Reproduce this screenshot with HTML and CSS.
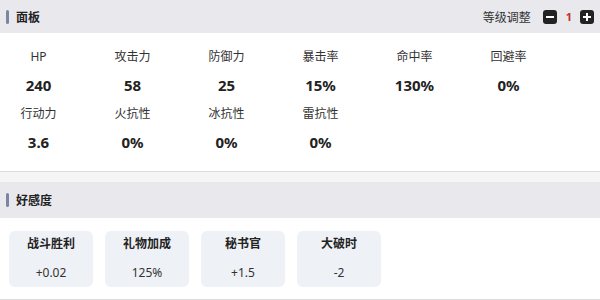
FILE: index.html
```html
<!DOCTYPE html>
<html lang="zh">
<head>
    <meta charset="UTF-8">
    <meta name="viewport" content="width=device-width, initial-scale=1.0">
    <title>面板</title>
    <link rel="stylesheet" href="styles.css">
</head>
<body>
    <div class="section-head">
        <div class="head-title"><span class="accent"></span>面板</div>
        <div class="level">
            <span class="level-label">等级调整</span>
            <button class="step">
                <svg width="10" height="10" viewBox="0 0 10 10"><rect x="1" y="4" width="8" height="2" fill="#fff"/></svg>
            </button>
            <span class="level-num">1</span>
            <button class="step">
                <svg width="10" height="10" viewBox="0 0 10 10"><rect x="1" y="4" width="8" height="2" fill="#fff"/><rect x="4" y="1" width="2" height="8" fill="#fff"/></svg>
            </button>
        </div>
    </div>

    <div class="stats">
        <div class="stat"><div class="stat-label">HP</div><div class="stat-value">240</div></div>
        <div class="stat"><div class="stat-label">攻击力</div><div class="stat-value">58</div></div>
        <div class="stat"><div class="stat-label">防御力</div><div class="stat-value">25</div></div>
        <div class="stat"><div class="stat-label">暴击率</div><div class="stat-value">15%</div></div>
        <div class="stat"><div class="stat-label">命中率</div><div class="stat-value">130%</div></div>
        <div class="stat"><div class="stat-label">回避率</div><div class="stat-value">0%</div></div>
        <div class="stat"><div class="stat-label">行动力</div><div class="stat-value">3.6</div></div>
        <div class="stat"><div class="stat-label">火抗性</div><div class="stat-value">0%</div></div>
        <div class="stat"><div class="stat-label">冰抗性</div><div class="stat-value">0%</div></div>
        <div class="stat"><div class="stat-label">雷抗性</div><div class="stat-value">0%</div></div>
    </div>

    <div class="gap-band"></div>

    <div class="section-head tall">
        <div class="head-title"><span class="accent"></span>好感度</div>
    </div>

    <div class="cards">
        <div class="card"><div class="card-title">战斗胜利</div><div class="card-value">+0.02</div></div>
        <div class="card"><div class="card-title">礼物加成</div><div class="card-value">125%</div></div>
        <div class="card"><div class="card-title">秘书官</div><div class="card-value">+1.5</div></div>
        <div class="card"><div class="card-title">大破时</div><div class="card-value">-2</div></div>
    </div>
</body>
</html>
```

FILE: styles.css
```css
body {
    margin: 0;
    padding: 0;
    font-family: "Noto Sans", "Noto Sans CJK SC", sans-serif;
    color: #333;
    background: #fff;
}
.section-head {
    height: 33px;
    background-color: #e8e8ed;
    display: flex;
    align-items: center;
    justify-content: space-between;
    padding: 0 6px;
}
.section-head.tall {
    height: 36px;
}
.head-title {
    display: flex;
    align-items: center;
    font-size: 12px;
    font-weight: bold;
    color: #222;
}
.accent {
    width: 3px;
    height: 14px;
    border-radius: 2px;
    background-color: #7b84a3;
    margin-right: 7px;
}
.level {
    display: flex;
    align-items: center;
}
.level-label {
    font-size: 12px;
    color: #333;
    margin-right: 12px;
}
.step {
    width: 14px;
    height: 14px;
    padding: 0;
    border: none;
    border-radius: 3px;
    background-color: #222;
    display: flex;
    align-items: center;
    justify-content: center;
}
.level-num {
    font-size: 11px;
    font-weight: bold;
    color: #c0302a;
    margin: 0 8px 0 9px;
}
.stats {
    display: grid;
    grid-template-columns: repeat(6, 63px);
    column-gap: 31px;
    row-gap: 10px;
    padding: 15px 7px 19px;
}
.stat {
    text-align: center;
}
.stat-label {
    font-size: 12px;
    line-height: 18px;
    color: #333;
}
.stat-value {
    font-size: 15px;
    font-weight: bold;
    line-height: 20px;
    margin-top: 9px;
    color: #222;
}
.gap-band {
    height: 10px;
    border-top: 1px solid #dcdcdc;
    background-color: #f5f5f6;
}
.cards {
    display: flex;
    gap: 12px;
    padding: 13px 9px 12px;
    border-bottom: 1px solid #dcdcdc;
}
.card {
    width: 84px;
    height: 56px;
    border-radius: 6px;
    background-color: #eef1f5;
    text-align: center;
    font-size: 12px;
}
.card-title {
    font-weight: bold;
    line-height: 18px;
    margin-top: 4px;
    color: #222;
}
.card-value {
    line-height: 18px;
    margin-top: 11px;
    color: #333;
}
```
